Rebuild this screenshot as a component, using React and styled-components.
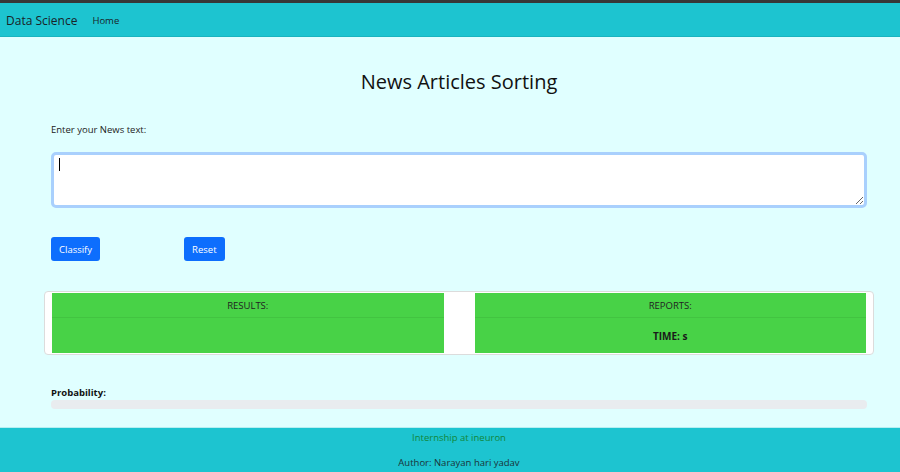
import React from "react";
import styled, { createGlobalStyle } from "styled-components";

const Global = createGlobalStyle`
  html, body { margin: 0; padding: 0; }
  body {
    background: #e0ffff;
    font-family: "Open Sans", "Noto Sans", sans-serif;
    color: #212529;
    height: 472px;
    overflow: hidden;
  }
  #root { min-height: 472px; display: flex; flex-direction: column; }
`;

const Page = styled.div`
  display: flex;
  flex-direction: column;
  min-height: 472px;
`;

const Navbar = styled.nav`
  height: 34px;
  border-top: 3px solid #373737;
  background: #1dc4d0;
  display: flex;
  align-items: center;
  padding-left: 6px;
  box-shadow: inset 0 -1px 0 #19b4bf;
`;

const Brand = styled.span`
  font-size: 12px;
  color: #1a2328;
  margin-right: 15px;
`;

const NavLink = styled.span`
  font-size: 9.5px;
  color: #1a2328;
`;

const Main = styled.main`
  flex: 1;
  padding: 0 33px 0 51px;
  display: flex;
  flex-direction: column;
`;

const Title = styled.h1`
  margin: 33px 0 0;
  text-align: center;
  font-size: 20px;
  font-weight: 500;
  line-height: 24px;
  color: #111;
`;

const Label = styled.label`
  margin-top: 29px;
  font-size: 9.5px;
  line-height: 14px;
  color: #222;
`;

const FieldWrap = styled.div`
  position: relative;
  margin-top: 15px;
`;

const TextArea = styled.textarea`
  display: block;
  box-sizing: border-box;
  width: 100%;
  height: 56px;
  border: 3px solid #a9d0fd;
  border-radius: 5px;
  background: #fff;
  outline: none;
  resize: vertical;
`;

const Caret = styled.span`
  position: absolute;
  left: 8px;
  top: 6px;
  width: 1px;
  height: 13px;
  background: #000;
`;

const ButtonRow = styled.div`
  display: flex;
  gap: 84px;
  margin-top: 29px;
`;

const Button = styled.button`
  height: 24px;
  padding: 0 8px;
  border: none;
  border-radius: 3px;
  background: #0d6efd;
  color: #fff;
  font-family: inherit;
  font-size: 9.5px;
`;

const Card = styled.section`
  margin: 30px -7px 0;
  background: #fff;
  border: 1px solid #dcdcdc;
  border-radius: 4px;
  padding: 1px 7px;
  display: grid;
  grid-template-columns: 1fr 1fr;
  gap: 31px;
`;

const Panel = styled.div`
  background: #48d247;
  display: flex;
  flex-direction: column;
`;

const PanelHead = styled.div`
  height: 24px;
  border-bottom: 1px solid #42c441;
  display: flex;
  align-items: center;
  justify-content: center;
  font-size: 9.5px;
  color: #222;
`;

const PanelBody = styled.div`
  height: 35px;
  display: flex;
  align-items: center;
  justify-content: center;
  font-size: 10px;
  font-weight: 700;
  color: #1a1a1a;
`;

const ProbLabel = styled.div`
  margin-top: 31px;
  font-size: 9.5px;
  font-weight: 700;
  line-height: 13px;
  color: #111;
`;

const Progress = styled.div`
  margin-top: 1px;
  height: 9px;
  border-radius: 4px;
  background: #e9ecef;
`;

const Footer = styled.footer`
  margin-top: 18px;
  height: 45px;
  box-sizing: border-box;
  padding: 0 33px 0 51px;
  background: #1dc4d0;
  border-top: 1px solid #b7eef2;
  display: flex;
  flex-direction: column;
  align-items: center;
  font-size: 9.5px;
`;

const FooterLine = styled.div`
  color: ${(p) => p.$color};
  margin-top: ${(p) => p.$mt}px;
  line-height: 13px;
`;

export default function App() {
  return (
    <Page>
      <Global />
      <Navbar>
        <Brand>Data Science</Brand>
        <NavLink>Home</NavLink>
      </Navbar>
      <Main>
        <Title>News Articles Sorting</Title>
        <Label>Enter your News text:</Label>
        <FieldWrap>
          <TextArea />
          <Caret />
        </FieldWrap>
        <ButtonRow>
          <Button>Classify</Button>
          <Button>Reset</Button>
        </ButtonRow>
        <Card>
          <Panel>
            <PanelHead>RESULTS:</PanelHead>
            <PanelBody />
          </Panel>
          <Panel>
            <PanelHead>REPORTS:</PanelHead>
            <PanelBody>TIME: s</PanelBody>
          </Panel>
        </Card>
        <ProbLabel>Probability:</ProbLabel>
        <Progress />
      </Main>
      <Footer>
        <FooterLine $color="#11873a" $mt={3}>Internship at ineuron</FooterLine>
        <FooterLine $color="#1a3338" $mt={12}>Author: Narayan hari yadav</FooterLine>
      </Footer>
    </Page>
  );
}
